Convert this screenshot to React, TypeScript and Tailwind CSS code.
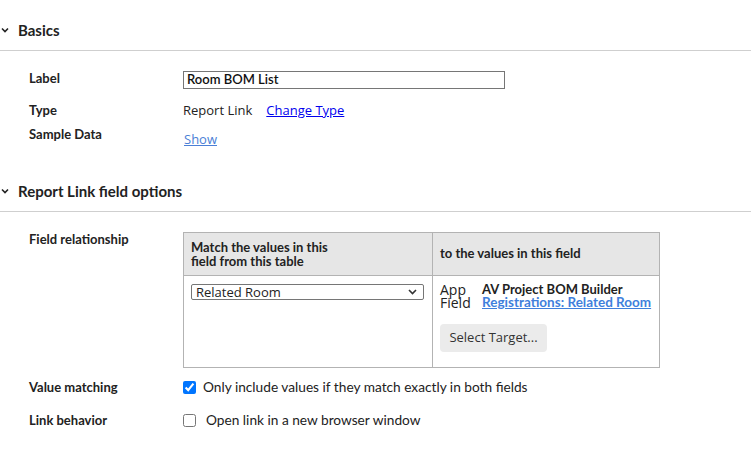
import React from 'react'

const lato = "font-['Lato','Liberation_Sans',sans-serif]"
const ui = "font-['Open_Sans','Noto_Sans',sans-serif]"

function Chevron() {
  return (
    <svg width="8" height="6" viewBox="0 0 8 6" className="shrink-0">
      <polyline points="1,1.5 4,4.5 7,1.5" fill="none" stroke="#222" strokeWidth="1.6" />
    </svg>
  )
}

function SectionHeader({ title }: { title: string }) {
  return (
    <div className="flex items-center gap-[9px] pl-[1px] pt-[21px] pb-[11px] border-b border-[#cfcfcf]">
      <Chevron />
      <h2 className={`${lato} text-[15px] leading-[18px] font-bold text-[#222]`}>{title}</h2>
    </div>
  )
}

function Row({ label, children, className = '' }: { label: string; children: React.ReactNode; className?: string }) {
  return (
    <div className={`flex items-start ${className}`}>
      <div className={`${lato} w-[183px] pl-[29px] shrink-0 text-[13px] leading-[14px] font-bold text-[#222]`}>
        {label}
      </div>
      <div className="flex-1">{children}</div>
    </div>
  )
}

export default function App() {
  return (
    <div className="w-[751px] h-[449px] bg-white overflow-hidden text-[#222]">
      <SectionHeader title="Basics" />

      <div className="flex flex-col">
        <Row label="Label" className="mt-[20px]">
          <input
            readOnly
            value="Room BOM List"
            className={`${lato} block w-[322px] h-[18px] px-[3px] border border-[#767676] text-[13px] font-semibold text-[#111] outline-none`}
          />
        </Row>

        <Row label="Type" className="mt-[14px]">
          <div className={`${ui} flex items-center gap-[14px] text-[13px] leading-[16px] -mt-[1px]`}>
            <span>Report Link</span>
            <a href="#" className="text-[#0000ee] underline">Change Type</a>
          </div>
        </Row>

        <Row label="Sample Data" className="mt-[9px]">
          <a href="#" className={`${ui} block mt-[4px] ml-[1px] text-[13px] leading-[16px] text-[#4b7fd6] underline`}>
            Show
          </a>
        </Row>
      </div>

      <div className="mt-[14px]">
        <SectionHeader title="Report Link field options" />
      </div>

      <Row label="Field relationship" className="mt-[20px]">
        <div className="w-[477px] grid grid-cols-[249px_1fr] border border-[#b3b3b3]">
          <div className={`${lato} h-[43px] flex items-center px-[7px] bg-[#e6e6e6] border-r border-b border-[#b3b3b3] text-[13px] leading-[14px] font-bold`}>
            <span>
              Match the values in this
              <br />
              field from this table
            </span>
          </div>
          <div className={`${lato} h-[43px] flex items-center px-[7px] bg-[#e6e6e6] border-b border-[#b3b3b3] text-[13px] font-bold`}>
            to the values in this field
          </div>
          <div className="h-[91px] px-[7px] pt-[8px] border-r border-[#b3b3b3]">
            <div className={`${ui} w-[233px] h-[16px] border border-[#767676] rounded-[2px] flex items-center justify-between pl-[4px] pr-[6px] text-[13px] leading-[14px]`}>
              <span>Related Room</span>
              <svg width="9" height="6" viewBox="0 0 9 6">
                <polyline points="1,1 4.5,4.5 8,1" fill="none" stroke="#333" strokeWidth="1.6" />
              </svg>
            </div>
          </div>
          <div className="h-[91px] px-[7px] pt-[7px]">
            <div className="grid grid-cols-[42px_1fr] items-center text-[13px] leading-[13px]">
              <span className={`${ui} text-[14px]`}>App</span>
              <span className={`${lato} font-bold`}>AV Project BOM Builder</span>
              <span className={`${ui} text-[14px]`}>Field</span>
              <a href="#" className={`${lato} text-[13.5px] font-bold text-[#3f7fdc] underline`}>Registrations: Related Room</a>
            </div>
            <button className={`${ui} block mt-[15px] w-[107px] h-[28px] rounded-[4px] bg-[#ebebeb] text-[13px] text-[#333]`}>
              Select Target...
            </button>
          </div>
        </div>
      </Row>

      <Row label="Value matching" className="mt-[12px]">
        <label className={`${lato} flex items-center gap-[7px] text-[13.7px] leading-[14px]`}>
          <input type="checkbox" defaultChecked className="w-[13px] h-[13px] m-0" />
          <span>Only include values if they match exactly in both fields</span>
        </label>
      </Row>

      <Row label="Link behavior" className="mt-[19px]">
        <label className={`${lato} flex items-center gap-[10px] text-[13.7px] leading-[14px]`}>
          <input type="checkbox" className="w-[13px] h-[13px] m-0" />
          <span>Open link in a new browser window</span>
        </label>
      </Row>
    </div>
  )
}
